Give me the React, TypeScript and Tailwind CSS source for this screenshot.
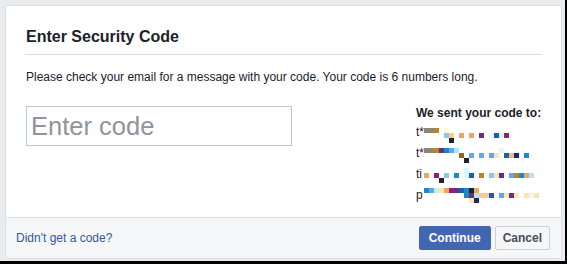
type Px = [number, number, number, string, number?];

// blocs de pixelisation des adresses masquees (x, y, largeur, couleur, hauteur)
const rows: { prefix: string; px: Px[] }[] = [
  {
    prefix: "t*",
    px: [
      [0, 7, 10, "#8f8374"],
      [10, 7, 5, "#b8862a"],
      [20, 7, 5, "#fffbd6"],
      [20, 12, 5, "#8fc4ee"],
      [25, 12, 5, "#fdcb8a"],
      [35, 12, 5, "#e8a86a"],
      [45, 12, 5, "#e8a86a"],
      [55, 12, 5, "#6a2d86"],
      [65, 12, 5, "#e5fbfb"],
      [70, 12, 5, "#1a5fae"],
      [75, 12, 5, "#d8f8fb"],
      [80, 12, 5, "#8d2466"],
      [25, 17, 5, "#1d2330"],
    ],
  },
  {
    prefix: "t*",
    px: [
      [0, 6, 10, "#8f8374"],
      [10, 6, 5, "#b8862a"],
      [15, 6, 5, "#6a2d86"],
      [20, 6, 5, "#1f86c8"],
      [25, 6, 5, "#62a8e6"],
      [30, 6, 5, "#b5e4f8"],
      [75, 6, 5, "#e0fafb"],
      [35, 11, 5, "#a85c26"],
      [45, 11, 5, "#62a8e6"],
      [55, 11, 5, "#62a8e6"],
      [65, 11, 5, "#62a8e6"],
      [70, 11, 5, "#fde5b0"],
      [80, 11, 5, "#1a5fae"],
      [85, 11, 5, "#f5b97a"],
      [90, 11, 5, "#20246a"],
      [100, 11, 5, "#1a8ac8"],
      [40, 16, 5, "#1d2330"],
    ],
  },
  {
    prefix: "ti",
    px: [
      [0, 10, 5, "#e8a86a"],
      [10, 10, 5, "#8d2466"],
      [20, 10, 5, "#8fc4ee"],
      [30, 10, 5, "#1a8ac8"],
      [40, 5, 5, "#d4fafd", 10],
      [45, 10, 5, "#1a5fae"],
      [55, 10, 5, "#b8862a"],
      [65, 10, 5, "#8fc4ee"],
      [70, 10, 5, "#fde5b0"],
      [75, 10, 5, "#6a2d86"],
      [85, 10, 5, "#62a8e6"],
      [90, 10, 5, "#b8862a"],
      [95, 10, 5, "#1f86c8"],
      [100, 10, 5, "#e8a86a"],
      [105, 10, 5, "#b5e4f8"],
      [15, 15, 5, "#1d2330"],
    ],
  },
  {
    prefix: "p",
    px: [
      [0, 4, 5, "#1f86c8"],
      [5, 4, 5, "#62a8e6"],
      [10, 4, 5, "#c8f0d8"],
      [15, 4, 5, "#fde5b0"],
      [20, 4, 5, "#e8a86a"],
      [25, 4, 5, "#8d2466"],
      [30, 4, 5, "#6a2d86"],
      [35, 4, 5, "#1a5fae"],
      [40, 4, 5, "#1f86c8"],
      [45, 4, 5, "#1d2330"],
      [50, 4, 5, "#e8a86a"],
      [40, 9, 5, "#1f86c8"],
      [45, 9, 5, "#6a2d86"],
      [50, 9, 5, "#b5e4f8"],
      [55, 9, 10, "#fdcb8a"],
      [65, 9, 5, "#1a5fae"],
      [75, 9, 5, "#62a8e6"],
      [80, 9, 5, "#fde5b0"],
      [85, 9, 5, "#6a2d86"],
      [90, 9, 5, "#fde5b0"],
      [100, 9, 5, "#fde5b0"],
      [105, 9, 5, "#e5fbfb"],
      [110, 9, 5, "#fde5b0"],
      [45, 14, 5, "#fde5b0"],
      [50, 14, 5, "#20246a"],
    ],
  },
];

export default function App() {
  return (
    <div
      className="w-[567px] h-[264px] bg-[#e9ebee] border-r-2 border-b-[3px] border-black pt-[5px] pl-[5px] pr-[3px] pb-[2px] flex"
      style={{ fontFamily: '"Liberation Sans", Arial, sans-serif' }}
    >
      <div className="flex-1 flex flex-col bg-white border border-[#dddfe2] rounded-[3px] overflow-hidden">
        <div className="flex-1 flex flex-col px-[19px]">
          {/* En-tete */}
          <div className="pt-[21px] pb-[7px] border-b border-[#dadde1]">
            <h1 className="text-[16px] leading-[20px] font-bold text-[#1d2129] pl-px">Enter Security Code</h1>
          </div>

          <p className="mt-[14px] text-[12px] leading-[16px] text-[#1d2129] pl-px">
            Please check your email for a message with your code. Your code is 6 numbers long.
          </p>

          <div className="flex justify-between mt-[21px]">
            <input
              placeholder="Enter code"
              className="ml-px w-[266px] h-[40px] border border-[#bdc7d8] px-1 text-[25.5px] text-[#1d2129] placeholder:text-[#90949c] outline-none"
              style={{ fontFamily: '"Liberation Sans", Arial, sans-serif' }}
            />
            <div className="w-[126px] -mt-px">
              <div className="text-[12px] leading-[16px] font-bold text-[#1d2129] whitespace-nowrap">We sent your code to:</div>
              {rows.map((r, i) => (
                <div key={i} className="flex h-[21px] items-center">
                  <span className="w-2 text-[12px] leading-[16px] text-[#1d2129]">{r.prefix}</span>
                  <svg width="118" height="21" className="self-start overflow-visible">
                    {r.px.map(([x, y, w, c, h], j) => (
                      <rect key={j} x={x} y={y} width={w} height={h ?? 5} fill={c} />
                    ))}
                  </svg>
                </div>
              ))}
            </div>
          </div>
        </div>

        {/* Pied de page */}
        <div className="h-[41px] border-t border-[#dddfe2] bg-[#f5f6f7] flex items-center justify-between pl-[10px] pr-[11px]">
          <span className="text-[12px] text-[#365899]">Didn't get a code?</span>
          <div className="flex gap-1">
            <button className="h-[24px] px-[9px] bg-[#4267b2] border border-[#4267b2] rounded-[2px] text-white text-[12px] font-bold">
              Continue
            </button>
            <button className="h-[24px] px-[7px] bg-[#f5f6f7] border border-[#ccd0d5] rounded-[2px] text-[#4b4f56] text-[12px] font-bold">
              Cancel
            </button>
          </div>
        </div>
      </div>
    </div>
  );
}
